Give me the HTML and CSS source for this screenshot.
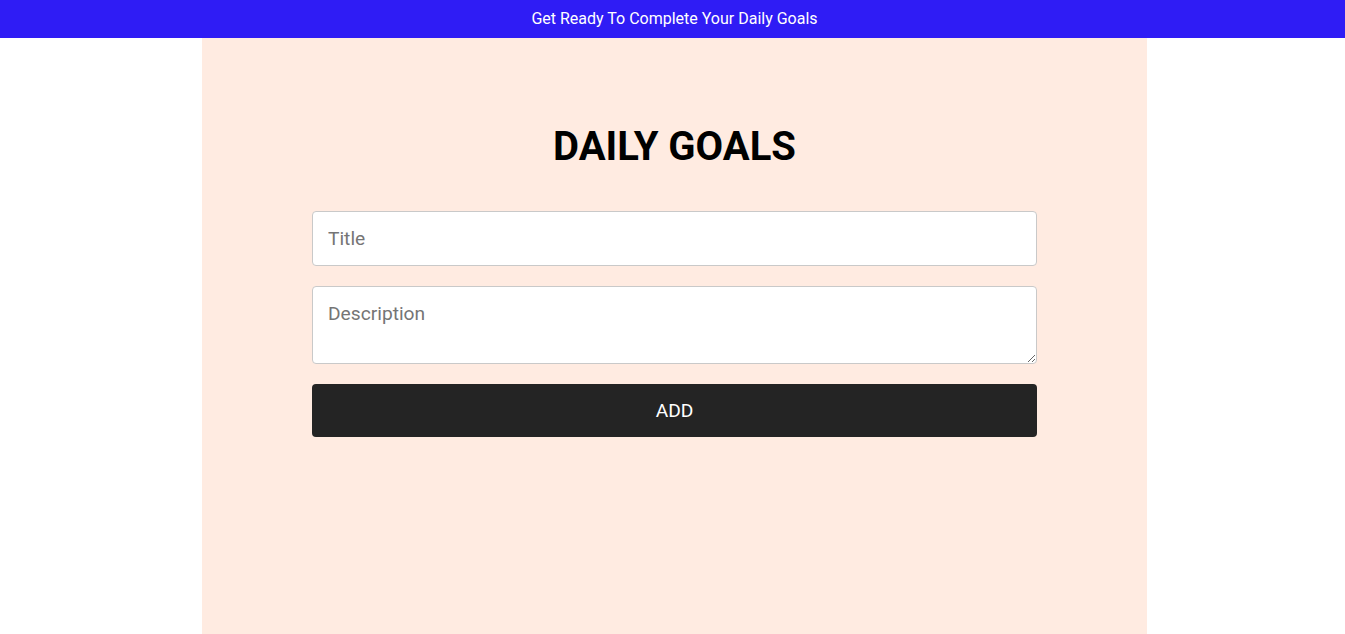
FILE: index.html
```html
<!DOCTYPE html>
<html lang="en">
<head>
<meta charset="utf-8">
<title>Daily Goals</title>
<link rel="stylesheet" href="styles.css">
</head>
<body>
<header class="topbar">Get Ready To Complete Your Daily Goals</header>
<main class="panel">
  <h1 class="title">DAILY GOALS</h1>
  <form class="goal-form">
    <input class="field field-title" type="text" placeholder="Title">
    <textarea class="field field-desc" placeholder="Description"></textarea>
    <button class="add-btn" type="button">ADD</button>
  </form>
</main>
</body>
</html>
```

FILE: styles.css
```css
html, body {
  margin: 0;
  padding: 0;
  background: #ffffff;
  font-family: Roboto, "Liberation Sans", Arial, sans-serif;
}
.topbar {
  height: 38px;
  display: flex;
  align-items: center;
  justify-content: center;
  padding-left: 4px;
  padding-bottom: 2px;
  box-sizing: border-box;
  background: #2f1cf5;
  color: #ffffff;
  font-size: 16px;
}
.panel {
  margin-left: 202px;
  width: 945px;
  min-height: 620px;
  background: #ffebe1;
  display: flex;
  flex-direction: column;
  align-items: center;
  padding-top: 85px;
  box-sizing: border-box;
}
.title {
  margin: 0 0 41px;
  font-size: 40px;
  font-weight: 700;
  line-height: 47px;
  color: #000000;
}
.goal-form {
  width: 725px;
  display: flex;
  flex-direction: column;
  gap: 20px;
}
.field {
  box-sizing: border-box;
  width: 100%;
  border: 1px solid #c9c9c9;
  border-radius: 4px;
  background: #ffffff;
  font-family: Roboto, "Liberation Sans", Arial, sans-serif;
  font-size: 19.2px;
  color: #222;
  padding: 0 15px;
  outline: none;
}
.field::placeholder {
  color: #757575;
}
.field-title {
  height: 55px;
}
.field-desc {
  height: 78px;
  padding-top: 15px;
  resize: vertical;
  display: block;
}
.add-btn {
  height: 53px;
  border: none;
  border-radius: 4px;
  background: #242424;
  color: #ffffff;
  font-family: Roboto, "Liberation Sans", Arial, sans-serif;
  font-size: 19.2px;
  cursor: pointer;
}
```
